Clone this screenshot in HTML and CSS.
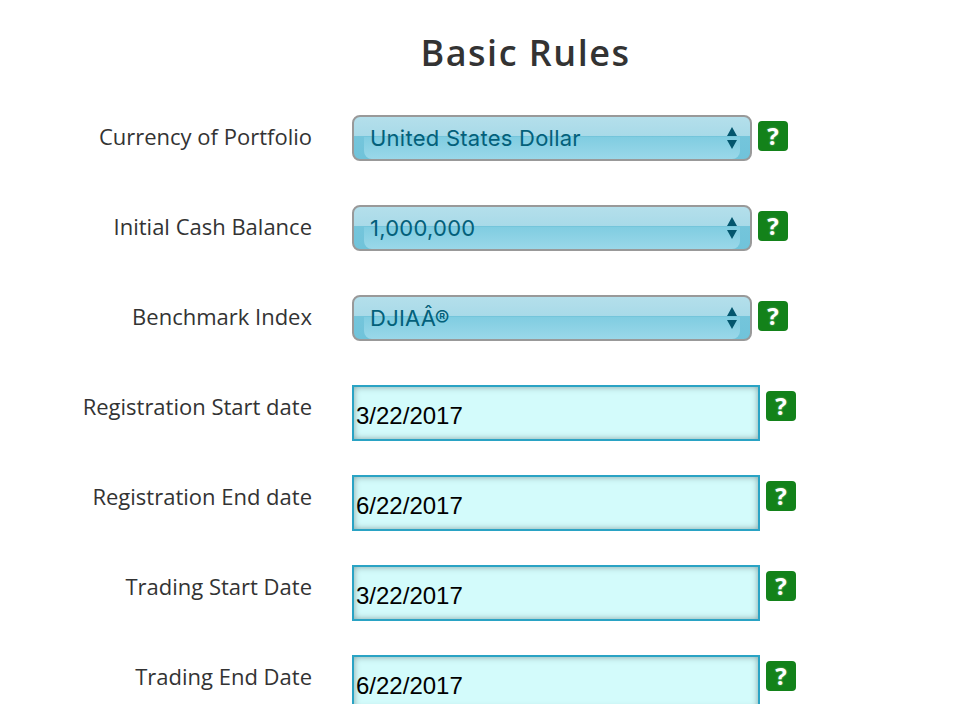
FILE: index.html
```html
<!DOCTYPE html>
<html lang="en">
<head>
<meta charset="utf-8">
<title>Basic Rules</title>
<link rel="stylesheet" href="styles.css">
</head>
<body>
<main class="page">
  <h1 class="title">Basic Rules</h1>
  <form class="rules">
    <div class="row">
      <label class="label">Currency of Portfolio</label>
      <div class="picker"><select class="picker-select"><option>United States Dollar</option></select>
        <svg class="arrows" width="12" height="24" viewBox="0 0 12 24"><path d="M6 1 11 10H1Z M1 14H11L6 23Z"/></svg></div>
      <span class="help">?</span>
    </div>
    <div class="row">
      <label class="label">Initial Cash Balance</label>
      <div class="picker"><select class="picker-select"><option>1,000,000</option></select>
        <svg class="arrows" width="12" height="24" viewBox="0 0 12 24"><path d="M6 1 11 10H1Z M1 14H11L6 23Z"/></svg></div>
      <span class="help">?</span>
    </div>
    <div class="row">
      <label class="label">Benchmark Index</label>
      <div class="picker"><select class="picker-select"><option>DJIAÂ®</option></select>
        <svg class="arrows" width="12" height="24" viewBox="0 0 12 24"><path d="M6 1 11 10H1Z M1 14H11L6 23Z"/></svg></div>
      <span class="help">?</span>
    </div>
    <div class="row">
      <label class="label">Registration Start date</label>
      <input class="date" type="text" value="3/22/2017">
      <span class="help">?</span>
    </div>
    <div class="row">
      <label class="label">Registration End date</label>
      <input class="date" type="text" value="6/22/2017">
      <span class="help">?</span>
    </div>
    <div class="row">
      <label class="label">Trading Start Date</label>
      <input class="date" type="text" value="3/22/2017">
      <span class="help">?</span>
    </div>
    <div class="row">
      <label class="label">Trading End Date</label>
      <input class="date" type="text" value="6/22/2017">
      <span class="help">?</span>
    </div>
  </form>
</main>
</body>
</html>
```
FILE: styles.css
```css
html, body {
  margin: 0;
  padding: 0;
  height: 704px;
  overflow: hidden;
  background: #fff;
}
.page {
  height: 704px;
  overflow: hidden;
  font-family: "Open Sans", sans-serif;
  color: #333;
}
.title {
  margin: 0;
  padding: 29px 0 0 83px;
  height: 115px;
  box-sizing: border-box;
  text-align: center;
  font-size: 36px;
  line-height: 48px;
  font-weight: 600;
  letter-spacing: 1.5px;
  color: #333;
}
.rules {
  display: flex;
  flex-direction: column;
}
.row {
  display: flex;
  align-items: flex-start;
  height: 90px;
}
.label {
  width: 312px;
  margin-right: 40px;
  text-align: right;
  font-size: 22px;
  line-height: 42px;
  color: #333;
}
.picker {
  position: relative;
  width: 400px;
  height: 46px;
  box-sizing: border-box;
  border: 2px solid #999;
  border-radius: 8px;
  overflow: hidden;
  background: linear-gradient(#b4dfeb 0, #a8dae8 46%, #74c5db 46%, #70c3da 100%);
}
.picker::before {
  content: "";
  position: absolute;
  left: 10px;
  right: 10px;
  top: 20px;
  bottom: 0;
  border-radius: 0 0 8px 8px;
  background: linear-gradient(#80cde1, #9ad8e9);
}
.picker-select {
  position: relative;
  appearance: none;
  width: 100%;
  height: 100%;
  border: 0;
  outline: 0;
  background: transparent;
  padding: 0 0 0 16px;
  font-family: "Inter", "Liberation Sans", sans-serif;
  font-size: 22px;
  letter-spacing: 0.25px;
  color: #03607a;
}
.arrows {
  position: absolute;
  right: 12px;
  top: 9px;
  fill: #03566e;
}
.date {
  width: 408px;
  height: 56px;
  box-sizing: border-box;
  border: 2px solid #2aa3c4;
  padding: 6px 0 0 2px;
  outline: 0;
  background: #d3fbfb;
  box-shadow: inset 0 0 6px rgba(70, 90, 90, 0.55);
  font-family: "Liberation Sans", sans-serif;
  font-size: 24px;
  color: #000;
}
.help {
  width: 30px;
  height: 30px;
  margin: 6px 0 0 6px;
  border-radius: 4px;
  background: #13821a;
  color: #fff;
  font-family: "Open Sans", sans-serif;
  font-weight: 700;
  font-size: 24px;
  line-height: 30px;
  text-align: center;
  text-shadow: 0 0 2px rgba(255, 255, 255, 0.5);
}
```
